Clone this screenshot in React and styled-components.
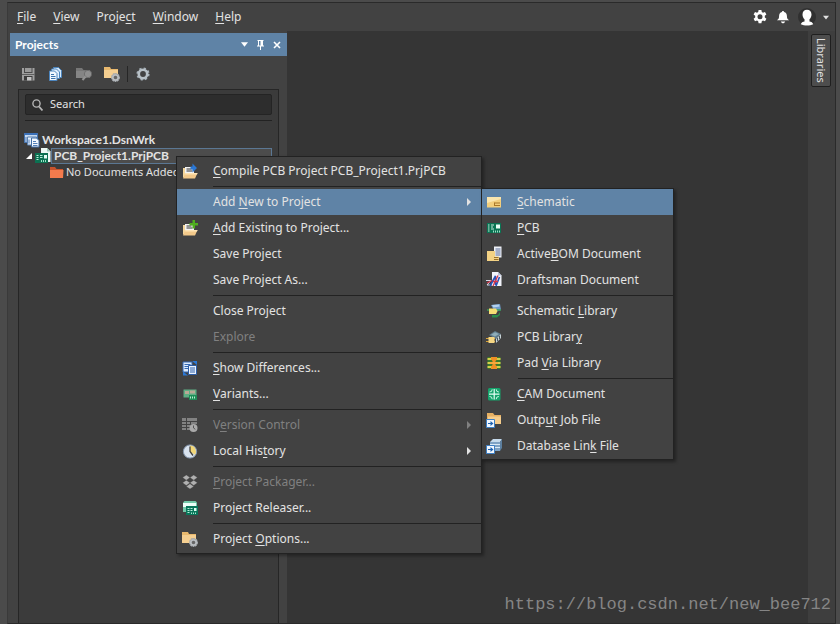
import React from "react";
import styled, { createGlobalStyle, css } from "styled-components";

const GlobalStyle = createGlobalStyle`
  * { box-sizing: border-box; }
  body {
    margin: 0;
    background: #4b4b4b;
    color: #e2e2e2;
    font-family: "Noto Sans", "Open Sans", sans-serif;
    font-size: 12px;
    line-height: 16px;
  }
  button, input { font: inherit; color: inherit; }
`;

const bareButton = css`
  padding: 0;
  border: 0;
  background: none;
  color: inherit;
  cursor: default;
`;

/* ---------- layout ---------- */

const Frame = styled.div`
  position: relative;
  display: flex;
  flex-direction: column;
  height: 100vh;
  padding: 2px 4px 0 7px;
  overflow: hidden;
  background: #4b4b4b;
`;

const Window = styled.div`
  flex: 1;
  display: flex;
  flex-direction: column;
  min-height: 0;
  border: 1px solid #2a2a2a;
  border-left-color: #3a3a3a;
  background: #424242;
`;

const MenuBar = styled.header`
  display: flex;
  align-items: center;
  justify-content: space-between;
  height: 28px;
  padding: 0 6px 0 9px;
`;

const MenuBarList = styled.nav`
  display: flex;
  gap: 17px;
`;

const MenuBarButton = styled.button`
  ${bareButton}
  font-size: 12px;
  line-height: 20px;
`;

const Account = styled.div`
  display: flex;
  align-items: center;
  gap: 8px;
`;

const IconButton = styled.button`
  ${bareButton}
  display: flex;
  align-items: center;
  gap: 7px;
`;

const Body = styled.div`
  flex: 1;
  display: flex;
  min-height: 0;
`;

const Workspace = styled.main`
  flex: 1;
  background: #353535;
`;

const DockStrip = styled.aside`
  width: 27px;
  padding: 3px 4px 0 3px;
  background: #3e3e3e;
`;

const DockTab = styled.button`
  ${bareButton}
  width: 20px;
  height: 53px;
  border: 1px solid #1f1f1f;
  border-radius: 2px;
  background: #4d4d4d;
  writing-mode: vertical-rl;
  font-size: 11px;
  line-height: 16px;
  text-align: center;
`;

/* ---------- projects panel ---------- */

const Panel = styled.section`
  display: flex;
  flex-direction: column;
  width: 279px;
  padding: 2px 0 0 2px;
  background: #424242;
`;

const PanelHeader = styled.div`
  display: flex;
  align-items: center;
  justify-content: space-between;
  height: 23px;
  padding: 0 6px 0 5px;
  background: #5f83a6;
  color: #ffffff;
`;

const PanelTitle = styled.h1`
  margin: 0;
  font-family: Lato, "Noto Sans", sans-serif;
  font-size: 12px;
  line-height: 16px;
  font-weight: 700;
`;

const PanelControls = styled.div`
  display: flex;
  align-items: center;
  gap: 8px;
`;

const Toolbar = styled.div`
  display: flex;
  align-items: center;
  gap: 12px;
  height: 33px;
  padding: 3px 10px 0;
`;

const Divider = styled.span`
  width: 1px;
  height: 16px;
  margin: 0 -5px;
  background: #262626;
`;

const PanelContent = styled.div`
  flex: 1;
  display: flex;
  flex-direction: column;
  margin: 0 8px;
  padding: 4px 6px 0 5px;
  border: 1px solid #262626;
  border-bottom: 0;
  background: #3b3b3b;
`;

const SearchBox = styled.label`
  display: flex;
  align-items: center;
  gap: 7px;
  height: 21px;
  margin-left: 1px;
  padding: 0 6px;
  border: 1px solid #242424;
  border-radius: 2px;
  background: #2d2d2d;
`;

const SearchInput = styled.input`
  flex: 1;
  min-width: 0;
  padding: 0 0 2px;
  border: 0;
  outline: 0;
  background: none;
  font-size: 11px;
  line-height: 14px;
  &::placeholder { color: #e2e2e2; opacity: 1; }
`;

const TreeRule = styled.hr`
  height: 1px;
  margin: 5px 0 11px 1px;
  border: 0;
  background: #222222;
`;

const Tree = styled.div`
  display: flex;
  flex-direction: column;
`;

const TreeRow = styled.div`
  display: flex;
  align-items: center;
  height: 16px;
  padding-left: ${(p) => p.$indent || 0}px;
  font-family: ${(p) => (p.$bold ? 'Lato, "Noto Sans", sans-serif' : "inherit")};
  font-size: ${(p) => (p.$bold ? 12 : 11)}px;
  font-weight: ${(p) => (p.$bold ? 700 : 400)};
  white-space: nowrap;
`;

const TreeLabel = styled.span`
  padding-left: 2px;
  line-height: 14px;
  ${(p) =>
    p.$selected &&
    css`
      flex: 1;
      border: 1px solid #5b7793;
      background: #4c4c4c;
    `}
`;

/* ---------- popup menus ---------- */

const MenuBox = styled.div`
  position: absolute;
  padding: 1px 0;
  border: 1px solid #222222;
  background: #424242;
  box-shadow: 2px 2px 3px rgba(0, 0, 0, 0.35);
`;

const ContextMenu = styled(MenuBox)`
  left: 176px;
  top: 156px;
  width: 306px;
`;

const SubMenu = styled(MenuBox)`
  left: 100%;
  top: -1px;
  width: 193px;
  padding: 0;
`;

const ItemWrap = styled.div`
  position: relative;
`;

const Item = styled.button`
  ${bareButton}
  display: flex;
  align-items: center;
  width: 100%;
  height: 26px;
  padding: 0 10px 0 ${(p) => (p.$narrow ? 4 : 5)}px;
  text-align: left;
  font-size: 12px;
  line-height: 20px;
  white-space: nowrap;
  background: ${(p) => (p.$active ? "#5f83a6" : "transparent")};
  &:disabled { color: #808080; }
`;

const ItemIcon = styled.span`
  display: flex;
  width: 31px;
`;

const ItemLabel = styled.span`
  flex: 1;
`;

const Separator = styled.hr`
  height: 1px;
  margin: 2px 0 2px 36px;
  border: 0;
  background: #222222;
`;

const Mnemonic = styled.span`
  text-decoration: underline;
  text-underline-offset: 2px;
  text-decoration-thickness: 1px;
`;

const Watermark = styled.div`
  position: absolute;
  right: 9px;
  bottom: 8px;
  color: #858585;
  font-family: "Liberation Mono", monospace;
  font-size: 17px;
  line-height: 22px;
`;

/* ---------- icons ---------- */

const Svg = ({ size = 16, children }) => (
  <svg width={size} height={size} viewBox="0 0 16 16" aria-hidden="true">
    {children}
  </svg>
);

const gearPath =
  "M6.6 1h2.8l.4 2 1.2.7 2-.7 1.4 2.4-1.6 1.4v1.6l1.6 1.4-1.4 2.4-2-.7-1.2.7-.4 2H6.6l-.4-2-1.2-.7-2 .7-1.4-2.4 1.6-1.4V6.8L1.6 5.4 3 3l2 .7L6.200 3zM8 5.300a2.500 2.500 0 1 0 0 5 2.500 2.500 0 0 0 0-5z";

const OpenFolder = () => (
  <>
    <path d="M1 5h2v8l-2 2z" fill="#f5d79c" />
    <path d="M3 4h9v8H3z" fill="#f4f4f4" />
    <path d="M4.500 6h5M4.500 8h6" stroke="#333" strokeWidth="1" />
    <path d="M3.500 10H15.500L13 15.500H1z" fill="#f3c98a" />
    <path d="M3.500 10H15.500l-.5 1.500H3z" fill="#ffe5b5" />
  </>
);

const FolderGear = () => (
  <>
    <path d="M0 1h6l1 2h7v9H0z" fill="#e9b96e" />
    <path d="M0 4h14v8H0z" fill="#f5cf91" />
    <circle cx="11.500" cy="11.500" r="3.700" fill="#666" stroke="#a3a8ac" strokeWidth="1.600" strokeDasharray="1.800 .6" />
    <circle cx="11.500" cy="11.500" r="2.700" fill="none" stroke="#b8bcc0" strokeWidth="1.800" />
  </>
);

const Board = () => (
  <>
    <path d="M1 3h14v10H1z" fill="#0b7353" />
    <path d="M2 5h1.500M2 7h1.500M2 9h1.500M2 11h1.500M5 5h3M5 7h2M5 9h3" stroke="#c9efe0" strokeWidth="1" />
    <path d="M10 4.500h4v4h-4z" fill="#e8fff6" />
    <path d="M7.500 10.500v2M9.500 10.500v2M11.500 10.500v2M13.500 10.500v2" stroke="#9fe0c8" strokeWidth="1" />
  </>
);

const LinkBadge = () => (
  <>
    <path d="M.5 7.500h8v8h-8z" fill="#f2f8ff" stroke="#3d7fc4" />
    <path d="M2 11h2.500V9L7.500 11.500 4.500 14v-2H2z" fill="#1d62b0" />
  </>
);

const icons = {
  compile: (
    <>
      <OpenFolder />
      <path d="M8.500 3.500h2V.5L15 5l-4.500 4.500V6.500h-2z" fill="#2b78d6" />
    </>
  ),
  addExisting: (
    <>
      <OpenFolder />
      <path d="M10.500 0h2.500v3h3v2.500h-3v3h-2.500v-3h-3V3h3z" fill="#4fae1f" />
    </>
  ),
  differences: (
    <>
      <path d="M1 2h9v10H1z" fill="#dcebfd" stroke="#3569b5" />
      <path d="M2.500 4.500h6M2.500 6.500h4M2.500 8.500h4" stroke="#3569b5" />
      <path d="M6.500 5.500h8v9h-8z" fill="#eaf3ff" stroke="#2c5ea8" />
      <path d="M8 8h5M8 10h5M8 12h5" stroke="#2c5ea8" />
      <path d="M10 1h5v4z" fill="#2b78d6" />
      <path d="M1 11.500v4h5z" fill="#2b78d6" />
    </>
  ),
  variants: (
    <>
      <path d="M1.500 3.500h13v8h-13z" fill="#5fae84" />
      <path d="M3 5h4v3H3zM8 4.500h5v3H8z" fill="#b9a995" />
      <path d="M7 9h8v5H7z" fill="#1e8d57" />
      <path d="M8.500 10.500v2M10.500 10.500v2M12.500 10.500v2" stroke="#b5f0cf" />
    </>
  ),
  version: (
    <>
      <path d="M0 1h4v3H0zM5 1h10v3H5zM0 5h4v2H0zM0 8h4v2H0zM0 11h4v2H0zM5 5h3v2H5zM5 8h3v2H5zM5 11h3v2H5zM9 5h6v2H9z" fill="#828282" />
      <circle cx="11.500" cy="11" r="4" fill="#aaaaaa" />
      <path d="M11.500 8.500V11l1.800 1.300" stroke="#555" fill="none" />
    </>
  ),
  history: (
    <>
      <circle cx="8" cy="8.500" r="6.600" fill="#d9e3ef" stroke="#8294ac" />
      <path d="M8 2.500a6 6 0 0 1 5 9.300L8 8.500z" fill="#f2d778" />
      <path d="M8 3.500v5l3 4" stroke="#44423a" strokeWidth="1.300" fill="none" />
    </>
  ),
  packager: (
    <path
      d="M4.300 1L8 3.600 4.300 6.200.6 3.600zM11.700 1l3.700 2.600-3.700 2.600L8 3.600zM4.300 6.200L8 8.800l-3.700 2.600L.6 8.800zM11.700 6.200l3.700 2.600-3.700 2.600L8 8.800zM8 9.800l3.700 2.600L8 15l-3.700-2.600z"
      fill="#b0b0b0"
      stroke="#424242"
      strokeWidth=".3"
    />
  ),
  releaser: (
    <>
      <path d="M1 2.500L2.500 1h11L15 2.500V12H1z" fill="#73c9a9" />
      <path d="M1 3h13v4H1z" fill="#edfff8" />
      <path d="M4 6h12v9H4z" fill="#08765a" />
      <path d="M5.500 8.500h2M5.500 10.500h2M5.500 12.500h2M8.500 8.500h2M8.500 10.500h2" stroke="#b6ecd9" />
      <path d="M12 8h2.500v3H12z" fill="#dffff4" />
      <path d="M9.500 12.500v1.500M11.500 12.500v1.500M13.500 12.500v1.500" stroke="#a9e8d0" />
    </>
  ),
  options: <FolderGear />,
  schematic: (
    <>
      <path d="M1 3h14v10.500H1z" fill="#f3cf7d" />
      <path d="M1 3h14v2L1 9z" fill="#fbe6ae" />
      <path d="M8.500 9H14M8.500 11.500H14M8.500 8.500v3.500" stroke="#a97728" />
    </>
  ),
  pcb: <Board />,
  bom: (
    <>
      <path d="M8 .5h7.500v11H8z" fill="#eef1f7" />
      <path d="M9.500 3h5M9.500 5h5M9.500 7h5M9.500 9h5" stroke="#5b6d96" />
      <path d="M1 5h8v10H1z" fill="#f3d284" />
      <path d="M6.500 10.500H13V15H6.500z" fill="#f3d284" />
      <path d="M8 11.500h4.500M8 13.500h4.500" stroke="#9a7026" />
    </>
  ),
  draftsman: (
    <>
      <path d="M6 0h6l3.500 3.500V14H6z" fill="#f1f3fa" />
      <path d="M12 0v3.500h3.500z" fill="#b9c3dc" />
      <path d="M0 8.500h5L1 13h5" stroke="#d3d8e4" fill="none" />
      <path d="M4 14L9.500 4v9M10 14l3.500-9" stroke="#2852b8" strokeWidth="1.600" fill="none" />
      <path d="M1 11l5-2.500M7 14l5-10.500M7 9.500h5" stroke="#d63448" strokeWidth="1.300" fill="none" />
    </>
  ),
  schLib: (
    <>
      <path d="M5 2l9-1 1 6-6 2z" fill="#6f9bcb" />
      <path d="M6 2l7-.5.5 2-6 1z" fill="#b4d2ef" />
      <path d="M1 7h14" stroke="#3a9b59" strokeWidth="1.500" />
      <path d="M3 5.500h7l1.500 2.500L10 11H3z" fill="#f6dd74" />
      <path d="M6 12h6l2-3v3l-3 2.500H6z" fill="#2b8c4d" />
    </>
  ),
  pcbLib: (
    <>
      <path d="M3 6l6-4 6 3-5 5z" fill="#5f7c8d" />
      <path d="M5 5.800l4-2.600 4 1.800-4 2.500z" fill="#8fadb9" />
      <path d="M10 10l5-5v4l-5 5z" fill="#c7d2d6" />
      <path d="M11.500 9v3M13.500 7v3" stroke="#4a5a60" />
      <path d="M0 9.500h9M0 12.500h9" stroke="#d7a23a" />
      <path d="M2.500 8h6v6h-6z" fill="#f4d684" />
    </>
  ),
  padVia: (
    <>
      <path d="M1.500 2h13v12h-13z" fill="#3b7a2c" />
      <path d="M1.500 3h13v2h-13zM1.500 7h13v2h-13zM1.500 11h13v2h-13z" fill="#d3cf4a" />
      <path d="M5 2h6v2.500L9.500 6v4l1.500 1.500V14H5v-2.500L6.500 10V6L5 4.500z" fill="#ef8f24" />
      <path d="M4 7h8v2H4z" fill="#f5a83c" />
    </>
  ),
  cam: (
    <>
      <rect x="2" y="2" width="12.500" height="12.500" rx="1.500" fill="#15a36b" />
      <path d="M8.200 3v10.500M3 8.200h10.500" stroke="#e3fff3" strokeWidth="1.200" />
      <path d="M3.500 6q2.700.2 2.700-2.700M12.900 6q-2.700.2-2.700-2.700M3.500 10.500q2.700-.2 2.700 2.700M12.900 10.500q-2.700-.2-2.700 2.700" stroke="#c8f7e2" fill="none" />
    </>
  ),
  outputJob: (
    <>
      <path d="M1 1h6l1.500 2H15v9H1z" fill="#e5af62" />
      <path d="M2 4.500h13V12H2z" fill="#f5cd8c" />
      <LinkBadge />
    </>
  ),
  dbLink: (
    <>
      <path d="M4 4l3-3h9l-2 3z" fill="#c6dbed" />
      <path d="M4 4h10v9H4z" fill="#7ea2c4" />
      <path d="M14 4l2-3v9l-2 3z" fill="#5c7f9f" />
      <path d="M4 6.500h10M4 9.500h10" stroke="#d8e8f5" />
      <LinkBadge />
    </>
  ),
};

const SaveIcon = () => (
  <Svg>
    <path d="M2 2h12.500v12.500H2z" fill="#a0a0a0" />
    <path d="M4 2h8.500v5H4z" fill="#4a4a4a" />
    <path d="M5 2h6.500v4H5z" fill="#9a9a9a" />
    <path d="M2 8.500h12.500" stroke="#606060" />
    <path d="M4 10h8.500v4.500H4z" fill="#3c3c3c" />
    <path d="M7 11h4.500v3.500H7z" fill="#c4c4c4" />
  </Svg>
);

const CopyIcon = () => (
  <Svg>
    <path d="M5.500 1.500h5l3 3v7h-8z" fill="#d5e9fb" stroke="#4d85bd" />
    <path d="M3.500 3h5l3 3v6.500h-8z" fill="#e3f1ff" stroke="#4d85bd" />
    <path d="M1.500 5h5L9 7.500v7H1.500z" fill="#f1f8ff" stroke="#4d85bd" />
    <path d="M3 8.500h3M3 10.500h4.500M3 12.500h4.500" stroke="#3b73ad" />
  </Svg>
);

const FolderSearchIcon = () => (
  <Svg>
    <path d="M0 2h6l1.500 2H14v8H0z" fill="#777" />
    <path d="M0 5h10v7H0z" fill="#858585" />
    <circle cx="12" cy="8" r="3.700" fill="#8f8f8f" stroke="#5c5c5c" strokeWidth=".6" />
    <path d="M9.500 10.500L6.500 14" stroke="#939393" strokeWidth="2" />
  </Svg>
);

const SettingsIcon = () => (
  <Svg>
    <circle cx="8" cy="8" r="5.600" fill="none" stroke="#a6b0b8" strokeWidth="2" strokeDasharray="2.200" />
    <circle cx="8" cy="8" r="4.200" fill="none" stroke="#b7c0c6" strokeWidth="2.600" />
  </Svg>
);

const WorkspaceIcon = () => (
  <Svg>
    <path d="M.5 1.500h13v9H.5z" fill="#c8daf0" stroke="#4472ad" />
    <path d="M.5 2h13" stroke="#3c71b8" strokeWidth="2" />
    <path d="M3.500 5h9v8h-9z" fill="#e6f0fb" stroke="#5a80ae" />
    <path d="M7.500 6h5l2.500 2.500V15H7.500z" fill="#f3f8ff" stroke="#416fa8" />
    <path d="M9 9.500h3M9 11.500h4.500M9 13.500h4.500M2 5v5M5 7.500v4" stroke="#527fb8" />
  </Svg>
);

const ProjectIcon = () => (
  <Svg>
    <path d="M6 0h6l3.500 3.500V14H6z" fill="#eefaf6" />
    <path d="M12 0v3.500h3.500z" fill="#9fc9bc" />
    <path d="M0 5h13v10H0z" fill="#0c7152" />
    <path d="M1.500 7.500h2M1.500 9.500h2M1.500 11.500h2M5 7.500h2.500M5 9.500h2.500" stroke="#b8eed9" />
    <path d="M9 7h3v3.500H9z" fill="#e4fff6" />
    <path d="M6.500 12v2M8.500 12v2M10.500 12v2" stroke="#9be3c6" />
  </Svg>
);

const EmptyFolderIcon = () => (
  <Svg>
    <path d="M2 3h5l1.500 2H15v9H2z" fill="#c9532c" />
    <path d="M2 6h13.500L15 14H2z" fill="#f47b4d" />
  </Svg>
);

const Triangle = styled.svg`
  display: block;
  fill: currentColor;
`;

const Down = ({ width = 7 }) => (
  <Triangle width={width} height="5" viewBox="0 0 8 5" aria-hidden="true">
    <path d="M0 0h8L4 5z" />
  </Triangle>
);

/* ---------- content ---------- */

const contextItems = [
  { label: "&Compile PCB Project PCB_Project1.PrjPCB", icon: "compile" },
  null,
  { label: "Add &New to Project", arrow: true, active: true, sub: true },
  { label: "&Add Existing to Project...", icon: "addExisting" },
  { label: "Save Project" },
  { label: "Save Project As..." },
  null,
  { label: "Close Project" },
  { label: "Explore", disabled: true },
  null,
  { label: "&Show Differences...", icon: "differences" },
  { label: "&Variants...", icon: "variants" },
  null,
  { label: "V&ersion Control", icon: "version", arrow: true, disabled: true },
  { label: "Local His&tory", icon: "history", arrow: true },
  null,
  { label: "&Project Packager...", icon: "packager", disabled: true },
  { label: "Project Releaser...", icon: "releaser" },
  null,
  { label: "Project &Options...", icon: "options" },
];

const newItems = [
  { label: "&Schematic", icon: "schematic", active: true },
  { label: "&PCB", icon: "pcb" },
  { label: "Active&BOM Document", icon: "bom" },
  { label: "Draftsman Document", icon: "draftsman" },
  null,
  { label: "Schematic &Library", icon: "schLib" },
  { label: "PCB Librar&y", icon: "pcbLib" },
  { label: "Pad &Via Library", icon: "padVia" },
  null,
  { label: "&CAM Document", icon: "cam" },
  { label: "Outp&ut Job File", icon: "outputJob" },
  { label: "Database Lin&k File", icon: "dbLink" },
];

const Label = ({ text }) => {
  const at = text.indexOf("&");
  if (at < 0) return text;
  return (
    <>
      {text.slice(0, at)}
      <Mnemonic>{text[at + 1]}</Mnemonic>
      {text.slice(at + 2)}
    </>
  );
};

const MenuItems = ({ items, narrow }) =>
  items.map((item, i) =>
    item ? (
      <ItemWrap key={i}>
        <Item role="menuitem" $active={item.active} $narrow={narrow} disabled={item.disabled}>
          <ItemIcon>{item.icon && <Svg>{icons[item.icon]}</Svg>}</ItemIcon>
          <ItemLabel>
            <Label text={item.label} />
          </ItemLabel>
          {item.arrow && (
            <Triangle width="4" height="8" viewBox="0 0 4 8" aria-hidden="true">
              <path d="M0 0l4 4-4 4z" />
            </Triangle>
          )}
        </Item>
        {item.sub && (
          <SubMenu role="menu" aria-label="Add New to Project">
            <MenuItems items={newItems} narrow />
          </SubMenu>
        )}
      </ItemWrap>
    ) : (
      <Separator key={i} />
    )
  );

export default function App() {
  return (
    <>
      <GlobalStyle />
      <Frame>
        <Window>
          <MenuBar>
            <MenuBarList aria-label="Main menu">
              {["&File", "&View", "Proje&ct", "&Window", "&Help"].map((text) => (
                <MenuBarButton key={text}>
                  <Label text={text} />
                </MenuBarButton>
              ))}
            </MenuBarList>
            <Account>
              <IconButton aria-label="Settings">
                <Svg>
                  <path d={gearPath} fill="#fff" fillRule="evenodd" />
                </Svg>
              </IconButton>
              <IconButton aria-label="Notifications">
                <Svg size={14}>
                  <path d="M8 1c.8 0 1.200.5 1.200 1.200C11.500 2.800 12.500 4.500 12.500 7c0 2.500.8 3.500 2.500 4.800H1C2.700 10.500 3.500 9.500 3.500 7c0-2.500 1-4.200 3.300-4.800C6.800 1.500 7.200 1 8 1zM5.500 13h5c-.5 1.500-1.500 2-2.500 2s-2-.5-2.500-2z" fill="#fff" />
                </Svg>
              </IconButton>
              <IconButton aria-label="Account">
                <Svg size={18}>
                  <circle cx="8" cy="8" r="8" fill="#303030" />
                  <path d="M8 1.500c2.500 0 4 1.600 4 4.200 0 1.800-.8 3.300-1.800 4.300v2c1.500.3 3 .9 3.300 2.500-3 1.500-8 1.500-11 0 .3-1.600 1.800-2.200 3.300-2.500v-2C4.800 9 4 7.500 4 5.700 4 3.100 5.500 1.500 8 1.500z" fill="#fff" />
                </Svg>
                <Down width={6} />
              </IconButton>
            </Account>
          </MenuBar>
          <Body>
            <Panel>
              <PanelHeader>
                <PanelTitle>Projects</PanelTitle>
                <PanelControls>
                  <IconButton aria-label="Panel menu">
                    <Down />
                  </IconButton>
                  <IconButton aria-label="Pin panel">
                    <svg width="9" height="10" viewBox="0 0 9 10" aria-hidden="true">
                      <path d="M1.500 .5h6M2.500 1v5M1 6h7M4.500 6v4" stroke="#fff" fill="none" />
                      <path d="M4.500 1H7v5H4.500z" fill="#fff" />
                    </svg>
                  </IconButton>
                  <IconButton aria-label="Close panel">
                    <svg width="8" height="8" viewBox="0 0 8 8" aria-hidden="true">
                      <path d="M1 1l6 6M7 1L1 7" stroke="#fff" strokeWidth="1.600" />
                    </svg>
                  </IconButton>
                </PanelControls>
              </PanelHeader>
              <Toolbar>
                <IconButton aria-label="Save"><SaveIcon /></IconButton>
                <IconButton aria-label="Copy documents"><CopyIcon /></IconButton>
                <IconButton aria-label="Find in folder"><FolderSearchIcon /></IconButton>
                <IconButton aria-label="Project options"><Svg><FolderGear /></Svg></IconButton>
                <Divider />
                <IconButton aria-label="Panel settings"><SettingsIcon /></IconButton>
              </Toolbar>
              <PanelContent>
                <SearchBox>
                  <svg width="11" height="12" viewBox="0 0 11 12" aria-hidden="true">
                    <circle cx="4.500" cy="4.500" r="3.600" fill="none" stroke="#b5b5b5" strokeWidth="1.400" />
                    <path d="M7 7.500l3.500 4" stroke="#b5b5b5" strokeWidth="1.800" />
                  </svg>
                  <SearchInput type="text" placeholder="Search" aria-label="Search" />
                </SearchBox>
                <TreeRule />
                <Tree role="tree">
                  <TreeRow role="treeitem" $bold>
                    <WorkspaceIcon />
                    <TreeLabel>Workspace1.DsnWrk</TreeLabel>
                  </TreeRow>
                  <TreeRow role="treeitem" aria-selected="true" $bold $indent={1}>
                    <svg width="10" height="8" viewBox="0 0 10 8" aria-hidden="true">
                      <path d="M7 1v6H1z" fill="#fff" />
                    </svg>
                    <ProjectIcon />
                    <TreeLabel $selected>PCB_Project1.PrjPCB</TreeLabel>
                  </TreeRow>
                  <TreeRow role="treeitem" $indent={24}>
                    <EmptyFolderIcon />
                    <TreeLabel>No Documents Added</TreeLabel>
                  </TreeRow>
                </Tree>
              </PanelContent>
            </Panel>
            <Workspace />
            <DockStrip>
              <DockTab>Libraries</DockTab>
            </DockStrip>
          </Body>
        </Window>
        <ContextMenu role="menu" aria-label="Project">
          <MenuItems items={contextItems} />
        </ContextMenu>
        <Watermark>https://blog.csdn.net/new_bee712</Watermark>
      </Frame>
    </>
  );
}
